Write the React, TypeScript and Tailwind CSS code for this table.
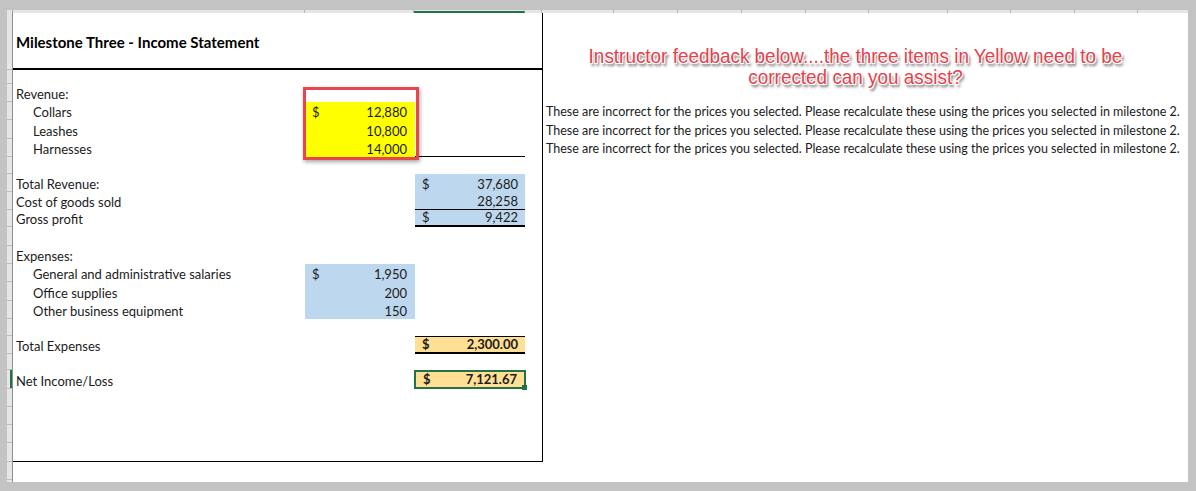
import React from "react";

type Cell = {
  text: string;
  dollar?: boolean;
  fill?: string;
  bold?: boolean;
  line?: string;
  selected?: boolean;
};

type Row = {
  h: string;
  label?: string;
  indent?: boolean;
  c2?: Cell;
  c3?: Cell;
};

const rows: Row[] = [
  { h: "h-[18px]", label: "Revenue:" },
  { h: "h-[18px]", label: "Collars", indent: true, c2: { text: "12,880", dollar: true, fill: "bg-[#ffff00]" } },
  { h: "h-[19px]", label: "Leashes", indent: true, c2: { text: "10,800", fill: "bg-[#ffff00]" } },
  { h: "h-[18px]", label: "Harnesses", indent: true, c2: { text: "14,000", fill: "bg-[#ffff00]" }, c3: { text: "", line: "border-b border-black" } },
  { h: "h-[17px]" },
  { h: "h-[18px]", label: "Total Revenue:", c3: { text: "37,680", dollar: true, fill: "bg-[#bdd7ee]" } },
  { h: "h-[18px]", label: "Cost of goods sold", c3: { text: "28,258", fill: "bg-[#bdd7ee]", line: "border-b border-black" } },
  { h: "h-[17px]", label: "Gross profit", c3: { text: "9,422", dollar: true, fill: "bg-[#bdd7ee]", line: "border-b-2 border-black" } },
  { h: "h-[19px]" },
  { h: "h-[18px]", label: "Expenses:" },
  { h: "h-[18px]", label: "General and administrative salaries", indent: true, c2: { text: "1,950", dollar: true, fill: "bg-[#bdd7ee]" } },
  { h: "h-[19px]", label: "Office supplies", indent: true, c2: { text: "200", fill: "bg-[#bdd7ee]" } },
  { h: "h-[18px]", label: "Other business equipment", indent: true, c2: { text: "150", fill: "bg-[#bdd7ee]" } },
  { h: "h-[17px]" },
  { h: "h-[18px]", label: "Total Expenses", c3: { text: "2,300.00", dollar: true, bold: true, fill: "bg-[#ffdf94]", line: "border-t border-b-2 border-black" } },
  { h: "h-[16px]" },
  { h: "h-[19px]", label: "Net Income/Loss", c3: { text: "7,121.67", dollar: true, bold: true, fill: "bg-[#ffdf94]", selected: true } },
];

const rowHeaders = [
  "h-[57px]", "h-[14px]", "h-[18px]", "h-[18px]", "h-[19px]", "h-[18px]", "h-[17px]", "h-[18px]",
  "h-[18px]", "h-[17px]", "h-[19px]", "h-[18px]", "h-[18px]", "h-[19px]", "h-[18px]", "h-[17px]",
  "h-[18px]", "h-[16px]", "h-[19px]", "h-[18px]", "h-[18px]", "h-[18px]", "h-[19px]", "h-[18px]",
];

const colHeaders = [
  "w-[292px]", "w-[109px]", "w-[111px]", "w-[17px]", "w-[72px]", "w-[64px]", "w-[64px]", "w-[64px]",
  "w-[63px]", "w-[79px]", "w-[63px]", "w-[64px]", "w-[63px]",
];

const feedback =
  "These are incorrect for the prices you selected. Please recalculate these using the prices you selected in milestone 2.";

function ValueCell({ cell, pr }: { cell?: Cell; pr: string }) {
  if (!cell) return <div className="w-[110px]" />;
  const inner = (
    <div
      className={`flex h-full w-full items-end justify-between pl-[7px] ${pr} ${cell.fill ?? ""} ${cell.line ?? ""} ${cell.bold ? "font-bold" : ""}`}
    >
      <span>{cell.dollar ? "$" : ""}</span>
      <span>{cell.text}</span>
    </div>
  );
  if (cell.selected) {
    return (
      <div className="relative -ml-px w-[112px] border-2 border-[#217346]">
        {inner}
        <div className="absolute -right-[3px] -bottom-[3px] h-[5px] w-[5px] bg-[#217346]" />
      </div>
    );
  }
  return <div className="w-[110px]">{inner}</div>;
}

export default function App() {
  return (
    <div className="h-[491px] w-[1196px] bg-[#c3c3c3] pt-[10px] pr-[8px] pb-[9px] pl-[7px] font-['Lato',sans-serif] text-[13px] leading-[16px] text-[#1b1b1b]">
      <div className="flex h-full flex-col overflow-hidden bg-white">
        {/* column header strip */}
        <div className="flex h-[3px] shrink-0 bg-[#e6e6e6]">
          <div className="w-[6px] border-r border-[#a0a0a0]" />
          {colHeaders.map((w, i) => (
            <div
              key={i}
              className={`${w} border-r border-[#b4b4b4] ${i === 2 ? "border-b-2 border-b-[#217346]" : ""}`}
            />
          ))}
        </div>

        <div className="flex flex-1">
          {/* row header strip */}
          <div className="flex w-[6px] shrink-0 flex-col border-r border-[#8f8f8f] bg-[#e6e6e6]">
            {rowHeaders.map((h, i) => (
              <div key={i} className={`${h} flex shrink-0 justify-end border-b border-[#bdbdbd]`}>
                {i === 18 && <div className="h-full w-[2px] bg-[#217346]" />}
              </div>
            ))}
          </div>

          {/* income statement box */}
          <div className="relative flex h-[449px] w-[530px] shrink-0 flex-col border-r border-b border-black">
            <div className="flex h-[57px] items-center border-b-2 border-black pt-[3px] pl-[3px] text-[15px] font-bold text-black">
              Milestone Three - Income Statement
            </div>
            <div className="mt-[14px] flex flex-col">
              {rows.map((r, i) => (
                <div key={i} className={`${r.h} flex`}>
                  <div className={`flex w-[292px] items-end ${r.indent ? "pl-[20px]" : "pl-[3px]"}`}>
                    {r.label}
                  </div>
                  <ValueCell cell={r.c2} pr="pr-[8px]" />
                  <ValueCell cell={r.c3} pr="pr-[7px]" />
                </div>
              ))}
            </div>
            {/* annotation box */}
            <div className="absolute top-[74px] left-[290px] h-[73px] w-[116px] border-[3px] border-[#e8464f] shadow-[1px_2px_4px_rgba(0,0,0,0.35)]" />
          </div>

          {/* right side */}
          <div className="flex flex-1 flex-col">
            <div className="h-[89px] pt-[32px] pr-[20px]">
              <div className="origin-center scale-x-[0.9] text-center font-['Liberation_Sans',sans-serif] text-[21px] leading-[21px] text-[#e5414c] [text-shadow:-1px_-1px_0_#fff,1px_-1px_0_#fff,-1px_1px_0_#fff,1px_1px_0_#fff,0_0_2px_#fff,2px_3px_3px_rgba(0,0,0,0.7)]">
                <div>Instructor feedback below....the three items in Yellow need to be</div>
                <div>corrected can you assist?</div>
              </div>
            </div>
            {["h-[18px]", "h-[19px]", "h-[18px]"].map((h, i) => (
              <div key={i} className={`${h} flex items-end pl-[3px] text-[12.5px] whitespace-nowrap`}>
                {feedback}
              </div>
            ))}
          </div>
        </div>
      </div>
    </div>
  );
}
